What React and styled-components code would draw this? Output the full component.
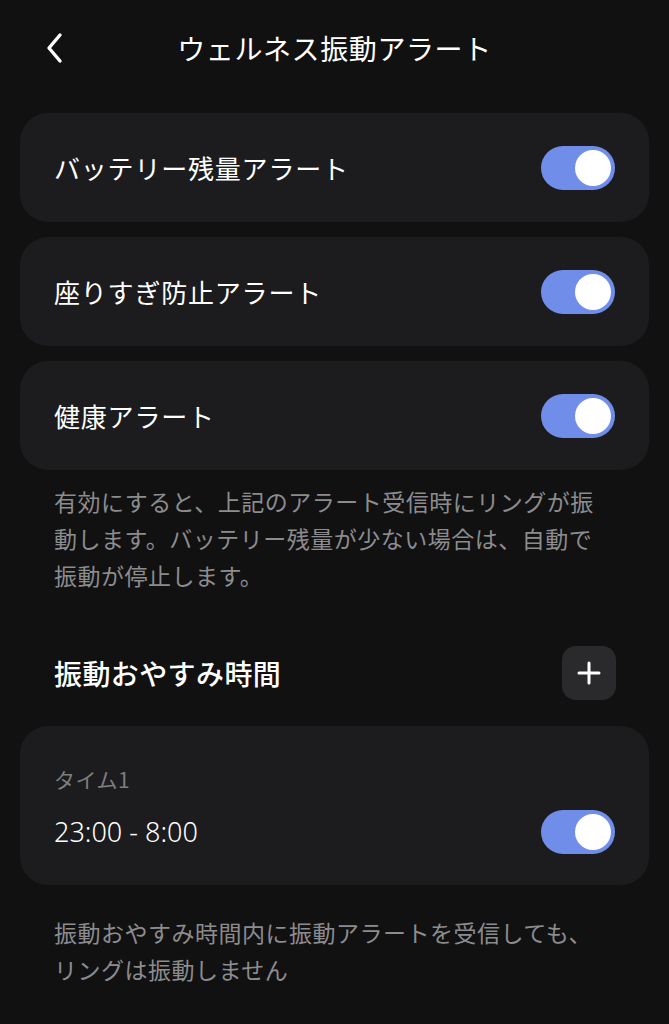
import React, { useState } from "react";
import styled, { createGlobalStyle } from "styled-components";

const GlobalStyle = createGlobalStyle`
  html, body {
    margin: 0;
    padding: 0;
    background: #111112;
  }
  body {
    font-family: "Noto Sans CJK JP", "Noto Sans", sans-serif;
    color: #ffffff;
  }
`;

const Page = styled.div`
  width: 669px;
  min-height: 1024px;
  box-sizing: border-box;
  padding: 0 20px;
  background: #111112;
`;

const Header = styled.header`
  height: 96px;
  display: grid;
  grid-template-columns: 60px 1fr 60px;
  align-items: center;
`;

const BackButton = styled.button`
  border: none;
  background: transparent;
  padding: 0 0 0 25px;
  display: flex;
  align-items: center;
  color: #fff;
`;

const Title = styled.h1`
  margin: 0;
  text-align: center;
  font-size: 28px;
  font-weight: 400;
  letter-spacing: 0.6px;
`;

const List = styled.div`
  display: flex;
  flex-direction: column;
  gap: 15px;
  margin-top: 17px;
`;

const Card = styled.div`
  background: #1c1c1e;
  border-radius: 28px;
  padding: 0 34px;
  height: 109px;
  box-sizing: border-box;
  display: flex;
  align-items: center;
  justify-content: space-between;
`;

const Label = styled.span`
  font-size: 26px;
  font-weight: 400;
  letter-spacing: 0.8px;
`;

const Track = styled.button`
  width: 74px;
  height: 44px;
  border: none;
  border-radius: 22px;
  padding: 4px;
  background: ${(p) => (p.$on ? "#6f8de9" : "#3a3a3c")};
  display: flex;
  justify-content: ${(p) => (p.$on ? "flex-end" : "flex-start")};
  cursor: pointer;
`;

const Knob = styled.span`
  width: 36px;
  height: 36px;
  border-radius: 50%;
  background: #ffffff;
`;

const Note = styled.p`
  margin: ${(p) => p.$margin};
  padding: 0 34px;
  font-size: 23px;
  line-height: 37px;
  letter-spacing: 0.5px;
  color: #8c8c8e;
`;

const SectionRow = styled.div`
  display: flex;
  align-items: center;
  justify-content: space-between;
  padding: 0 33px 0 34px;
  margin-top: 52px;
`;

const SectionTitle = styled.h2`
  margin: 0;
  font-size: 28px;
  font-weight: 500;
  letter-spacing: 0.4px;
`;

const AddButton = styled.button`
  width: 54px;
  height: 54px;
  border: none;
  border-radius: 14px;
  background: #2a2a2c;
  display: flex;
  align-items: center;
  justify-content: center;
  color: #fff;
`;

const TimeCard = styled(Card)`
  height: auto;
  margin-top: 26px;
  padding: 38px 34px 35px;
  align-items: flex-end;
`;

const TimeInfo = styled.div`
  display: flex;
  flex-direction: column;
  gap: 20px;
`;

const TimeName = styled.span`
  font-size: 21px;
  line-height: 30px;
  color: #7d7d80;
  letter-spacing: 0.5px;
`;

const TimeRange = styled.span`
  font-size: 27px;
  line-height: 36px;
  font-family: "Noto Sans", sans-serif;
  font-weight: 300;
`;

const ToggleSlot = styled.div`
  margin-bottom: -4px;
`;

const Toggle = ({ initial = true }) => {
  const [on, setOn] = useState(initial);
  return (
    <Track $on={on} onClick={() => setOn(!on)}>
      <Knob />
    </Track>
  );
};

const alerts = ["バッテリー残量アラート", "座りすぎ防止アラート", "健康アラート"];

export default function App() {
  return (
    <Page>
      <GlobalStyle />
      <Header>
        <BackButton>
          <svg width="20" height="32" viewBox="0 0 20 32" fill="none">
            <path d="M15 3 L4 16 L15 29" stroke="#fff" strokeWidth="3.4" strokeLinecap="round" strokeLinejoin="round" />
          </svg>
        </BackButton>
        <Title>ウェルネス振動アラート</Title>
        <div />
      </Header>
      <List>
        {alerts.map((a) => (
          <Card key={a}>
            <Label>{a}</Label>
            <Toggle />
          </Card>
        ))}
      </List>
      <Note $margin="13px 0 0">
        有効にすると、上記のアラート受信時にリングが振動します。バッテリー残量が少ない場合は、自動で振動が停止します。
      </Note>
      <SectionRow>
        <SectionTitle>振動おやすみ時間</SectionTitle>
        <AddButton>
          <svg width="24" height="24" viewBox="0 0 24 24">
            <path d="M12 2 V22 M2 12 H22" stroke="#fff" strokeWidth="3" strokeLinecap="round" />
          </svg>
        </AddButton>
      </SectionRow>
      <TimeCard>
        <TimeInfo>
          <TimeName>タイム1</TimeName>
          <TimeRange>23:00 - 8:00</TimeRange>
        </TimeInfo>
        <ToggleSlot>
          <Toggle />
        </ToggleSlot>
      </TimeCard>
      <Note $margin="29px 0 0">
        振動おやすみ時間内に振動アラートを受信しても、リングは振動しません
      </Note>
    </Page>
  );
}
